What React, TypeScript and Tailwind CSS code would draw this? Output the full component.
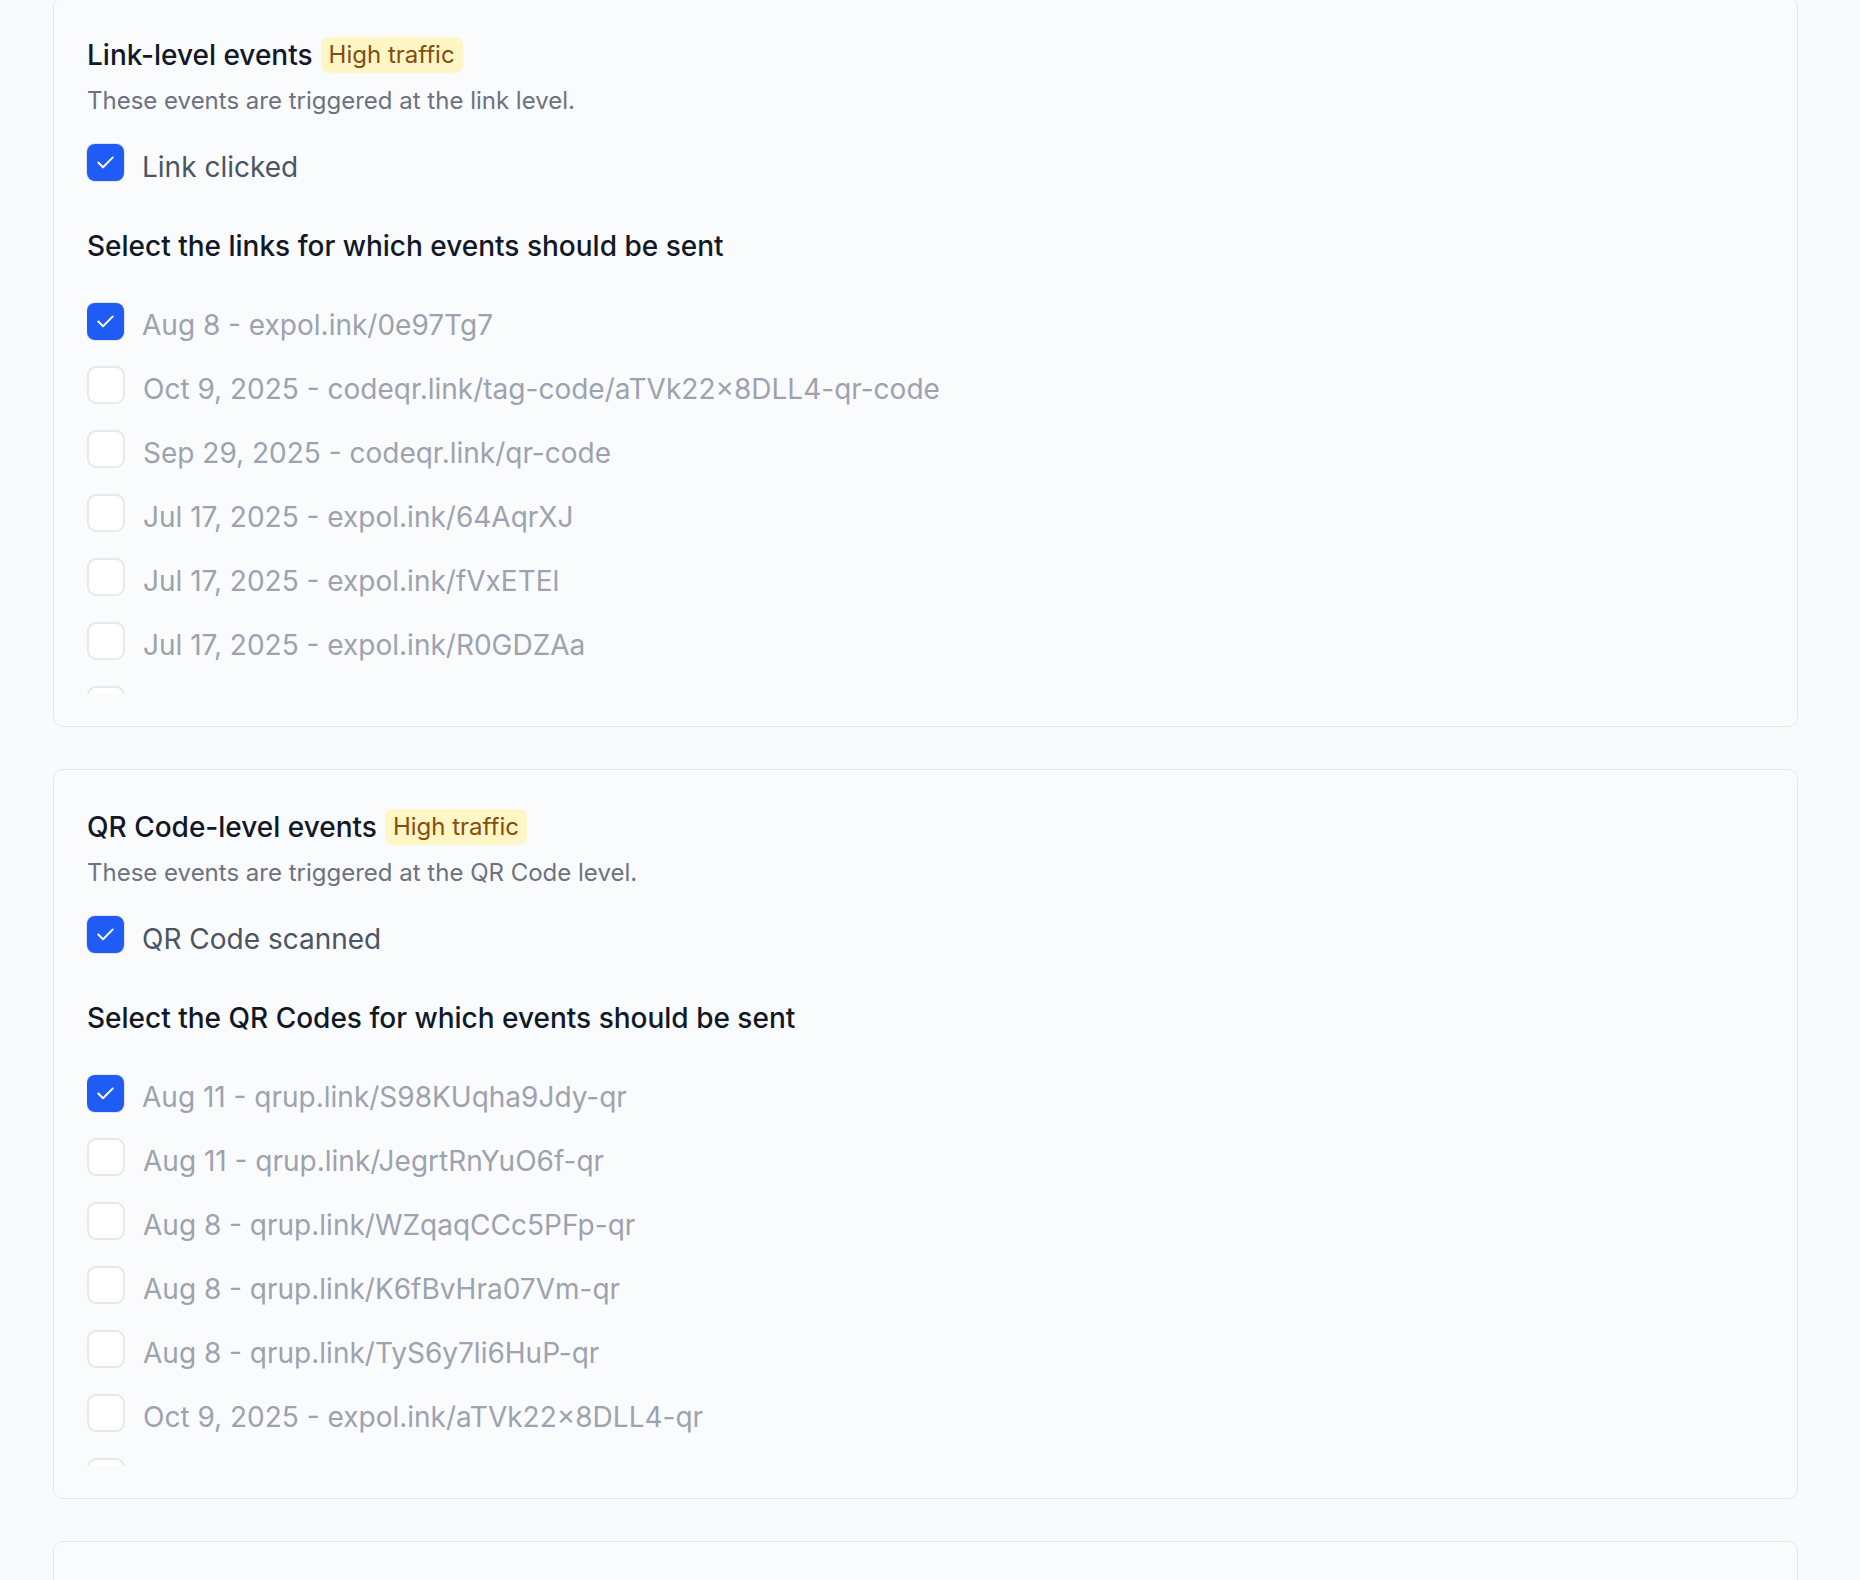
import React from 'react';

interface EventSectionProps {
  title: string;
  description: string;
  eventLabel: string;
  listTitle: string;
  items: { label: string; checked?: boolean }[];
}

function CheckBox({ checked = false }: { checked?: boolean }) {
  if (checked) {
    return (
      <span className="flex h-[37px] w-[37px] shrink-0 items-center justify-center rounded-[8px] bg-[#1f5cf6] shadow-[0_0_0_1px_#e2e5ea]">
        <svg width="27" height="27" viewBox="0 0 24 24" fill="none" stroke="white" strokeWidth="1.7" strokeLinecap="round" strokeLinejoin="round">
          <path d="M18.5 7.5 9.8 16.2 5.6 12" />
        </svg>
      </span>
    );
  }
  return <span className="h-[38px] w-[38px] shrink-0 rounded-[9px] border-2 border-[#e6e8eb] bg-white" />;
}

function EventSection({ title, description, eventLabel, listTitle, items }: EventSectionProps) {
  return (
    <div className="ml-[53px] w-[1745px] rounded-[10px] border border-[#e5e7eb] bg-[#fafbfc] px-[33px] pt-[39px] pb-[32px]">
      <div className="flex h-[36px] items-center gap-[8px]">
        <h3 className="text-[28px] font-medium leading-[36px] text-[#111827]">{title}</h3>
        <span className="flex h-[36px] items-center rounded-[8px] bg-[#fef6c4] px-[8px] text-[24px] leading-none text-[#854d0e]">
          High traffic
        </span>
      </div>
      <p className="mt-[12px] text-[24px] leading-[32px] text-[#6b7280]">{description}</p>

      <label className="mt-[27px] flex h-[37px] items-center gap-[18px]">
        <CheckBox checked />
        <span className="translate-y-[4px] text-[28px] leading-[36px] text-[#4b5563]">{eventLabel}</span>
      </label>

      <h4 className="mt-[47px] text-[28px] font-medium leading-[36px] text-[#111827]">{listTitle}</h4>

      <div className="mt-[25px] h-[405px] overflow-hidden">
        {items.map((item, i) => (
          <label key={i} className="flex h-[64px] items-center gap-[18px]">
            <CheckBox checked={item.checked} />
            <span className="translate-y-[4px] text-[28px] leading-[36px] text-[#9ca3af]">{item.label}</span>
          </label>
        ))}
      </div>
    </div>
  );
}

const links = [
  { label: 'Aug 8 - expol.ink/0e97Tg7', checked: true },
  { label: 'Oct 9, 2025 - codeqr.link/tag-code/aTVk22×8DLL4-qr-code' },
  { label: 'Sep 29, 2025 - codeqr.link/qr-code' },
  { label: 'Jul 17, 2025 - expol.ink/64AqrXJ' },
  { label: 'Jul 17, 2025 - expol.ink/fVxETEl' },
  { label: 'Jul 17, 2025 - expol.ink/R0GDZAa' },
  { label: '' },
];

const qrCodes = [
  { label: 'Aug 11 - qrup.link/S98KUqha9Jdy-qr', checked: true },
  { label: 'Aug 11 - qrup.link/JegrtRnYuO6f-qr' },
  { label: 'Aug 8 - qrup.link/WZqaqCCc5PFp-qr' },
  { label: 'Aug 8 - qrup.link/K6fBvHra07Vm-qr' },
  { label: 'Aug 8 - qrup.link/TyS6y7li6HuP-qr' },
  { label: 'Oct 9, 2025 - expol.ink/aTVk22×8DLL4-qr' },
  { label: '' },
];

export default function App() {
  return (
    <div className="h-[1580px] overflow-hidden bg-[#f9fafb] font-['Inter','Noto_Sans',sans-serif]">
      <div className="mt-[-3px] flex flex-col gap-[42px]">
        <EventSection
          title="Link-level events"
          description="These events are triggered at the link level."
          eventLabel="Link clicked"
          listTitle="Select the links for which events should be sent"
          items={links}
        />
        <EventSection
          title="QR Code-level events"
          description="These events are triggered at the QR Code level."
          eventLabel="QR Code scanned"
          listTitle="Select the QR Codes for which events should be sent"
          items={qrCodes}
        />
        <div className="ml-[53px] h-[300px] w-[1745px] rounded-[10px] border border-[#e5e7eb] bg-[#fafbfc]" />
      </div>
    </div>
  );
}
